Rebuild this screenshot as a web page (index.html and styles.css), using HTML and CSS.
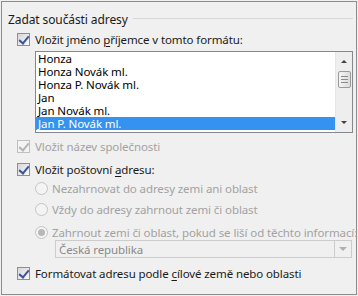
FILE: index.html
```html
<!DOCTYPE html>
<html lang="cs">
<head>
    <meta charset="UTF-8">
    <title>Zadat součásti adresy</title>
    <link rel="stylesheet" href="styles.css">
</head>
<body>
    <div class="dialog">
        <div class="section-title">
            <span>Zadat součásti adresy</span>
            <div class="rule"></div>
        </div>

        <label class="row check r-name">
            <span class="box checked"></span>
            <span>Vložit jméno <u>p</u>říjemce v tomto formátu:</span>
        </label>

        <div class="listbox">
            <div class="items">
                <div class="item">Honza</div>
                <div class="item">Honza Novák ml.</div>
                <div class="item">Honza P. Novák ml.</div>
                <div class="item">Jan</div>
                <div class="item">Jan Novák ml.</div>
                <div class="item selected">Jan P. Novák ml.</div>
            </div>
            <div class="scrollbar">
                <div class="arrow up"></div>
                <div class="thumb"><i></i><i></i><i></i></div>
                <div class="track"></div>
                <div class="arrow down"></div>
            </div>
        </div>

        <label class="row check disabled r-company">
            <span class="box checked"></span>
            <span>Vložit název společnosti</span>
        </label>

        <label class="row check r-postal">
            <span class="box checked"></span>
            <span>Vložit poštovní <u>a</u>dresu:</span>
        </label>

        <label class="row radio disabled r-radio1">
            <span class="dot"></span>
            <span>Nezahrnovat do adresy zemi ani oblast</span>
        </label>
        <label class="row radio disabled r-radio2">
            <span class="dot"></span>
            <span>Vždy do adresy zahrnout zemi či oblast</span>
        </label>
        <label class="row radio disabled r-radio3">
            <span class="dot on"></span>
            <span>Zahrnout zemi či oblast, pokud se liší od těchto informací:</span>
        </label>

        <div class="combo">
            <span class="value">Česká republika</span>
            <span class="drop"></span>
        </div>

        <label class="row check r-format">
            <span class="box checked"></span>
            <span>Formátovat adresu podle <u>c</u>ílové země nebo oblasti</span>
        </label>
    </div>
</body>
</html>
```

FILE: styles.css
```css
* {
    margin: 0;
    padding: 0;
    box-sizing: border-box;
}

body {
    background: #f0f0f0;
    font-family: "Noto Sans", "Open Sans", sans-serif;
    font-size: 11.5px;
    letter-spacing: -0.1px;
    color: #1a1a1a;
}

.dialog {
    margin: 1px 0 0 1px;
    width: 356px;
    height: 294px;
    border: 1px solid #8c8c8c;
    background: #f0f0f0;
    display: flex;
    flex-direction: column;
    padding: 9px 3px 0 15px;
}

.section-title {
    height: 16px;
    display: flex;
    align-items: center;
    margin-left: -9px;
    white-space: nowrap;
    font-size: 12px;
}

.section-title .rule {
    flex: 1;
    height: 1px;
    background: #d5d5d5;
    margin: 0 0 2px 5px;
}

.row {
    height: 16px;
    display: flex;
    align-items: center;
    white-space: nowrap;
}

.row u {
    text-decoration-thickness: 1px;
    text-underline-offset: 2px;
}

.r-name { margin-top: 4px; }
.r-company { margin-top: 5px; }
.r-postal { margin-top: 7px; }
.r-radio1 { margin-top: 3px; margin-left: 18px; }
.r-radio2 { margin-top: 5px; margin-left: 18px; }
.r-radio3 { margin-top: 7px; margin-left: 18px; }
.r-format { margin-top: 7px; }

.disabled {
    color: #a2a2a2;
}

.box {
    width: 13px;
    height: 13px;
    border: 1px solid #8e8f8f;
    background: linear-gradient(135deg, #d6d6d6, #fbfbfb);
    margin-right: 5px;
    position: relative;
    flex: none;
}

.box.checked::after {
    content: "";
    position: absolute;
    left: 3px;
    top: 0px;
    width: 4px;
    height: 8px;
    border-right: 2px solid #3c5498;
    border-bottom: 2px solid #3c5498;
    transform: rotate(40deg);
}

.disabled .box {
    border-color: #c0c0c0;
    background: #f4f4f4;
}

.disabled .box.checked::after {
    border-color: #b4b4b4;
}

.dot {
    width: 13px;
    height: 13px;
    border-radius: 50%;
    border: 1px solid #c4c4c4;
    background: #f4f4f4;
    margin-right: 4px;
    flex: none;
    position: relative;
}

.dot.on::after {
    content: "";
    position: absolute;
    left: 2px;
    top: 2px;
    width: 7px;
    height: 7px;
    border-radius: 50%;
    background: #b8b8b8;
}

.listbox {
    margin: 4px 0 0 18px;
    height: 82px;
    border: 1px solid #828790;
    background: #fff;
    display: flex;
}

.items {
    flex: 1;
}

.item {
    height: 13px;
    line-height: 13px;
    padding-left: 2px;
    color: #000;
    white-space: nowrap;
}

.item.selected {
    background: #3592ee;
    color: #fff;
}

.scrollbar {
    width: 17px;
    background: #eeeeee;
    border-left: 1px solid #e6e6e6;
    display: flex;
    flex-direction: column;
    align-items: center;
}

.arrow {
    height: 19px;
    width: 100%;
    display: flex;
    align-items: center;
    justify-content: center;
}

.arrow::after {
    content: "";
    border-left: 3px solid transparent;
    border-right: 3px solid transparent;
}

.arrow.up::after {
    border-bottom: 3px solid #404040;
}

.arrow.down::after {
    border-top: 3px solid #404040;
}

.thumb {
    width: 13px;
    height: 17px;
    border: 1px solid #9a9a9a;
    border-radius: 2px;
    background: linear-gradient(90deg, #f4f4f4, #dcdcdc);
    display: flex;
    flex-direction: column;
    align-items: center;
    justify-content: center;
    gap: 2px;
}

.thumb i {
    display: block;
    width: 7px;
    height: 1px;
    background: #8a8a8a;
}

.track {
    flex: 1;
}

.combo {
    margin: 0 1px 0 38px;
    height: 18px;
    border: 1px solid #cccccc;
    background: #f0f0f0;
    display: flex;
    align-items: center;
    color: #8a8a8a;
}

.combo .value {
    flex: 1;
    padding-left: 3px;
}

.combo .drop {
    width: 17px;
    height: 100%;
    border-left: 1px solid #cccccc;
    display: flex;
    align-items: center;
    justify-content: center;
}

.combo .drop::after {
    content: "";
    border-left: 4px solid transparent;
    border-right: 4px solid transparent;
    border-top: 4px solid #b0b0b0;
}
```
